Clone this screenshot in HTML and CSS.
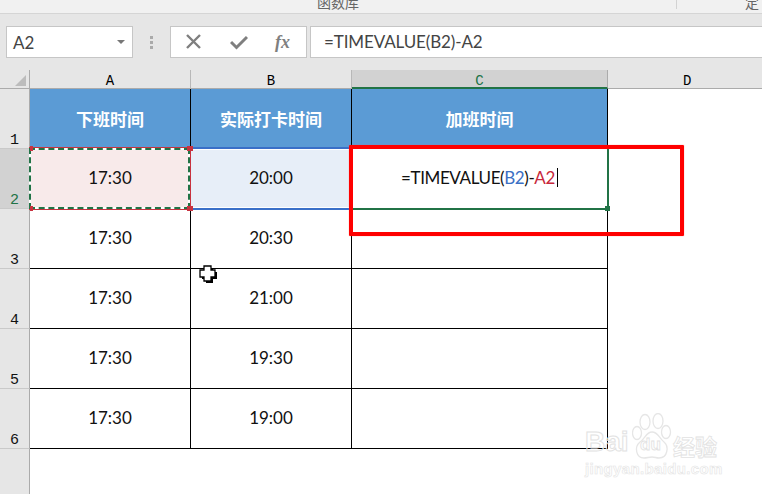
FILE: index.html
```html
<!DOCTYPE html>
<html lang="zh">
<head>
<meta charset="utf-8">
<title>TIMEVALUE</title>
<link rel="stylesheet" href="styles.css">
</head>
<body>
<div class="app">
  <div class="ribbon">
    <span class="ribbon-label lib">函数库</span>
    <span class="ribbon-sep"></span>
    <span class="ribbon-label def">定</span>
  </div>
  <div class="fbar">
    <div class="namebox"><span>A2</span><i class="caret"></i></div>
    <div class="grip"><b></b><b></b><b></b></div>
    <div class="btns">
      <svg class="ic" width="18" height="18" viewBox="0 0 18 18"><path d="M2 2 L15 15 M15 2 L2 15" stroke="#7f7f7f" stroke-width="2.4" fill="none"/></svg>
      <svg class="ic" width="18" height="18" viewBox="0 0 18 18"><path d="M1 9 L6.5 14.5 L17 4" stroke="#7f7f7f" stroke-width="3" fill="none"/></svg>
      <span class="fx">fx</span>
    </div>
    <div class="formula">=TIMEVALUE(B2)-A2</div>
  </div>
  <div class="sheet">
    <div class="corner"><i></i></div>
    <div class="ch">A</div><div class="ch">B</div><div class="ch on">C</div><div class="ch last">D</div>

    <div class="rh">1</div><div class="th">下班时间</div><div class="th">实际打卡时间</div><div class="th">加班时间</div><div class="blank"></div>
    <div class="rh on">2</div><div class="td pink">17:30</div><div class="td blue">20:00</div><div class="td edit"><span>=TIMEVALUE(<em class="rb">B2</em>)-<em class="rr">A2</em></span><i class="cursor"></i></div><div class="blank"></div>
    <div class="rh">3</div><div class="td">17:30</div><div class="td">20:30</div><div class="td"></div><div class="blank"></div>
    <div class="rh">4</div><div class="td">17:30</div><div class="td">21:00</div><div class="td"></div><div class="blank"></div>
    <div class="rh">5</div><div class="td">17:30</div><div class="td">19:30</div><div class="td"></div><div class="blank"></div>
    <div class="rh">6</div><div class="td">17:30</div><div class="td">19:00</div><div class="td"></div><div class="blank"></div>
    <div class="rh tail"></div>

    <div class="ref-b"></div>
    <div class="ref-a"><i class="h tl"></i><i class="h tr"></i><i class="h bl"></i><i class="h br"></i></div>
    <div class="sel"><i class="sel-h"></i></div>
    <div class="red"></div>
    <svg class="pointer" width="21" height="21" viewBox="0 0 21 21"><path d="M6 1 H13 V5 H17 V12 H13 V16 H6 V12 H2 V5 H6 Z" fill="#000" transform="translate(2 2)"/><path d="M6 1 H13 V5 H17 V12 H13 V16 H6 V12 H2 V5 H6 Z" fill="#fff" stroke="#000" stroke-width="1.3"/></svg>
    <div class="wm">
      <div class="wm-top">
        <span class="wm-bai">Bai</span>
        <div class="wm-pawbox">
          <svg width="40" height="47" viewBox="0 0 40 47" fill="none" stroke="#e6e6e6" stroke-width="1.3"><ellipse cx="13" cy="9" rx="5" ry="7.5"/><ellipse cx="26" cy="8" rx="5" ry="7.5"/><ellipse cx="5" cy="20" rx="4.5" ry="6.5"/><ellipse cx="34" cy="19" rx="4.5" ry="6.5"/><path d="M20 19c6 0 7 6 12 10 5 4 4 16-5 16-3 0-4-1-7-1s-5 1-8 1c-8 0-10-11-4-16 5-3 6-10 12-10z"/></svg>
          <span class="wm-du">du</span>
        </div>
        <span class="wm-cn">经验</span>
      </div>
      <div class="wm-url">jingyan.baidu.com</div>
    </div>
  </div>
</div>
</body>
</html>
```

FILE: styles.css
```css
html, body { margin: 0; padding: 0; }
body { width: 762px; height: 494px; overflow: hidden; background: #fff; font-family: "Lato", "Noto Sans CJK SC", sans-serif; }
.app { width: 762px; height: 494px; display: flex; flex-direction: column; overflow: hidden; }

.ribbon { height: 13px; flex: none; background: #f1f1f1; border-bottom: 1px solid #d5d5d5; display: flex; align-items: flex-start; overflow: hidden; }
.ribbon-label { font: 14px/14px "Noto Sans CJK SC", sans-serif; color: #666; margin-top: -5px; }
.lib { margin-left: 317px; }
.ribbon-sep { width: 1px; height: 9px; background: #d3d3d3; margin-left: 317px; }
.def { margin-left: 68px; }

.fbar { height: 56px; flex: none; box-sizing: border-box; background: #e6e6e6; padding: 12px 0 12px 6px; display: flex; align-items: stretch; }
.namebox { width: 127px; box-sizing: border-box; background: #fff; border: 1px solid #c6c6c6; display: flex; align-items: center; justify-content: space-between; padding: 0 7px 0 6px; font: 17px "Lato", sans-serif; color: #444; }
.caret { width: 0; height: 0; border-left: 4px solid transparent; border-right: 4px solid transparent; border-top: 4px solid #777; }
.grip { width: 37px; display: flex; flex-direction: column; align-items: center; justify-content: center; gap: 2px; }
.grip b { width: 3px; height: 3px; background: #aaa; }
.btns { width: 137px; box-sizing: border-box; background: #fff; border: 1px solid #c6c6c6; display: flex; align-items: center; padding-left: 14px; gap: 27px; }
.ic { flex: none; }
.fx { font: italic bold 18px/1 "Liberation Serif", serif; color: #7f7f7f; }
.formula { flex: 1; margin-left: 3px; box-sizing: border-box; background: #fff; border: 1px solid #c6c6c6; border-right: 0; padding-left: 13px; font: 17px/29px "Lato", sans-serif; color: #444; letter-spacing: -.12px; }

.sheet { flex: 1; position: relative; display: grid; grid-template-columns: 30px 161px 161px 256px 1fr; grid-template-rows: 19px repeat(6, 60px) 1fr; }
.corner { background: #e6e6e6; border-bottom: 1px solid #ababab; border-right: 1px solid #ababab; box-sizing: border-box; position: relative; }
.corner i { position: absolute; right: 3px; bottom: 2px; width: 0; height: 0; border-left: 11px solid transparent; border-bottom: 11px solid #bcbcbc; }
.ch { background: #e6e6e6; border-bottom: 1px solid #ababab; border-right: 1px solid #b8b8b8; box-sizing: border-box; text-align: center; font: 14px/22px "Liberation Mono", monospace; color: #000; }
.ch.on { background: #d2d2d2; color: #217346; border-bottom: 2px solid #217346; border-right-color: #ababab; }
.ch.last { border-right: 0; text-align: left; padding-left: 75px; }
.rh { background: #e6e6e6; border-right: 1px solid #ababab; border-bottom: 1px solid #c9c9c9; box-sizing: border-box; font: 15px/14px "Liberation Mono", monospace; color: #111; display: flex; align-items: flex-end; justify-content: center; }
.rh.on { background: #d2d2d2; color: #217346; }
.rh.tail { border-bottom: 0; }
.th { background: #5b9bd5; border-right: 1px solid #000; box-sizing: border-box; color: #fff; font: bold 17px/1 "Noto Sans CJK SC", sans-serif; display: flex; align-items: center; justify-content: center; padding-bottom: 2px; }
.td { border-right: 1px solid #000; border-bottom: 1px solid #000; box-sizing: border-box; color: #111; font: 17px/1 "Lato", sans-serif; display: flex; align-items: center; justify-content: center; background: #fff; padding-bottom: 2px; }
.pink { background: #f8eaea; }
.blue { background: #e7eef8; }
.edit { border-right-color: transparent; letter-spacing: -.4px; }
.edit em { font-style: normal; }
.rb { color: #3b6fc4; }
.rr { color: #c8283c; }
.cursor { width: 1px; height: 19px; background: #000; margin-left: 2px; }
.blank { background: #fff; }

.ref-a { position: absolute; left: 29px; top: 77px; width: 162px; height: 63px; box-sizing: border-box; border: 1px solid #c8323f; border-left: 0; }
.ref-a::before, .ref-a::after { content: ""; position: absolute; inset: 0; border: 2px solid #fff; }
.ref-a::after { border: 2px dashed #217346; }
.h { position: absolute; z-index: 1; background: #c8323f; }
.tl { left: 1px; top: -2px; width: 3px; height: 5px; }
.tr { right: -3px; top: -2px; width: 6px; height: 5px; }
.bl { left: 1px; bottom: -2px; width: 3px; height: 5px; }
.br { right: -3px; bottom: -2px; width: 6px; height: 5px; }
.ref-b { position: absolute; left: 191px; top: 77px; width: 160px; height: 63px; box-sizing: border-box; border-top: 2px solid #3a6fc8; border-bottom: 2px solid #3a6fc8; box-shadow: inset 0 1px #fff, inset 0 -1px #fff; }
.sel { position: absolute; left: 351px; top: 78px; width: 258px; height: 62px; box-sizing: border-box; border: 2px solid #217346; border-top: 0; border-left: 0; }
.sel-h { position: absolute; right: -3px; bottom: -3px; width: 5px; height: 5px; background: #217346; }
.red { position: absolute; left: 349px; top: 75px; width: 335px; height: 91px; box-sizing: border-box; border: 4px solid #f00; border-radius: 1px; box-shadow: 0 0 1px #f55; }
.pointer { position: absolute; left: 198px; top: 195px; }

.wm { position: absolute; left: 585px; top: 343px; width: 140px; }
.wm-top { display: flex; align-items: flex-end; height: 47px; }
.wm-bai { font: bold 28px/34px "Liberation Sans", sans-serif; color: transparent; -webkit-text-stroke: 1px #e2e2e2; width: 47px; flex: none; margin-bottom: 1px; }
.wm-pawbox { position: relative; width: 40px; height: 47px; flex: none; }
.wm-du { position: absolute; left: 8px; bottom: 5px; font: bold 17px/20px "Liberation Sans", sans-serif; color: transparent; -webkit-text-stroke: .8px #e2e2e2; }
.wm-cn { font: bold 22px/28px "Noto Sans CJK SC", sans-serif; color: transparent; -webkit-text-stroke: .8px #e2e2e2; margin: 0 0 1px 1px; white-space: nowrap; }
.wm-url { font: bold 15px/18px "Liberation Sans", sans-serif; color: transparent; -webkit-text-stroke: .6px #e4e4e4; white-space: nowrap; letter-spacing: .35px; }
```
